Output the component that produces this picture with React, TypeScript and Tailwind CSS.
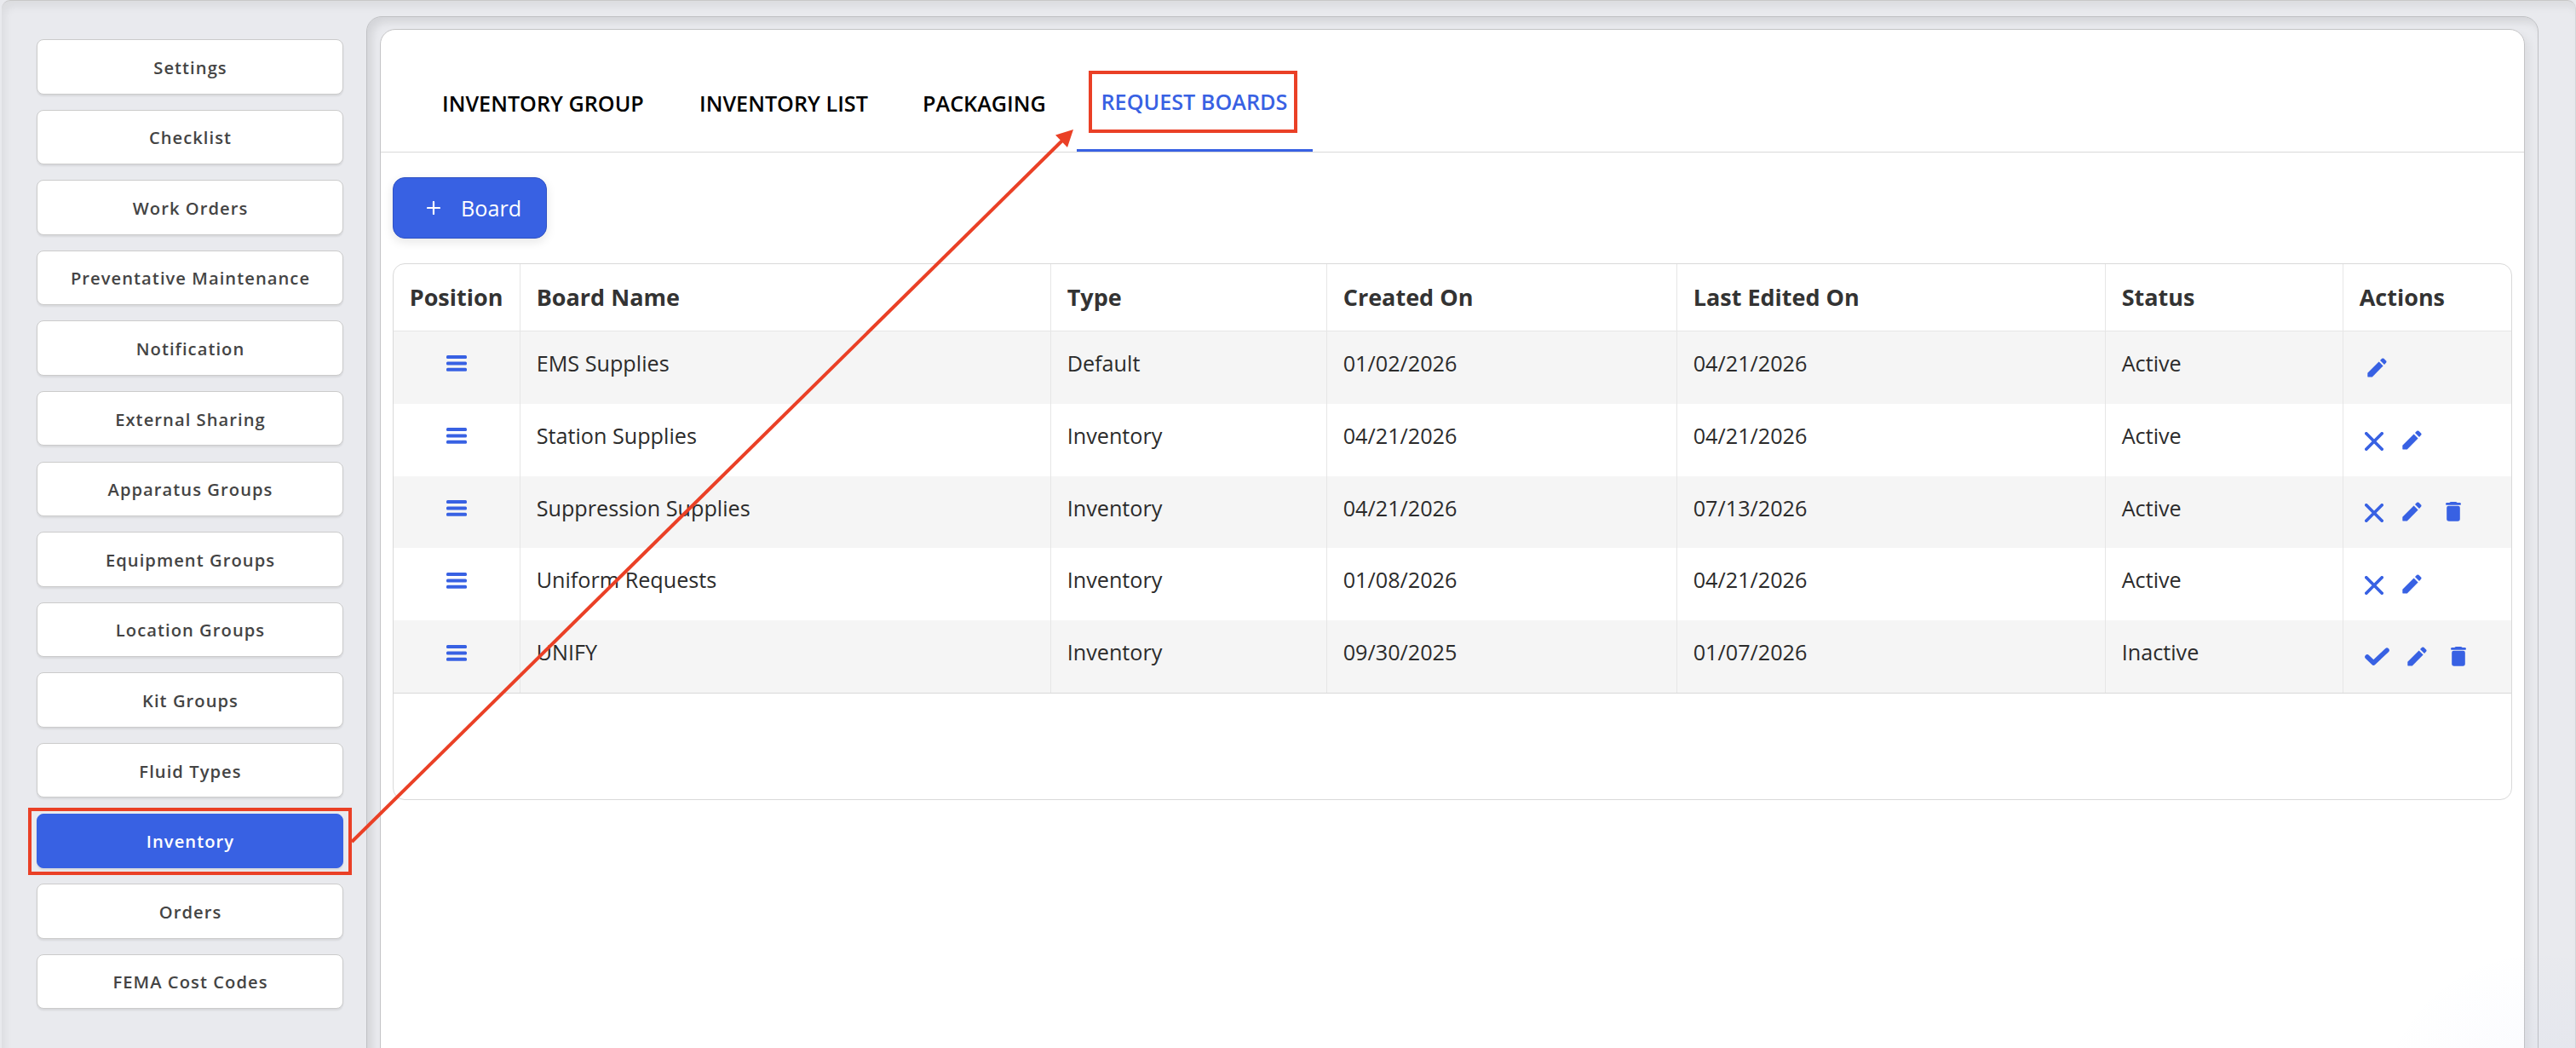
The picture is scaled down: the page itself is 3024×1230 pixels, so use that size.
import React from 'react';

interface Board {
  name: string;
  type: string;
  createdOn: string;
  lastEditedOn: string;
  active: boolean;
  canToggle: boolean;
  canDelete: boolean;
}

const menuItems = [
  'Settings',
  'Checklist',
  'Work Orders',
  'Preventative Maintenance',
  'Notification',
  'External Sharing',
  'Apparatus Groups',
  'Equipment Groups',
  'Location Groups',
  'Kit Groups',
  'Fluid Types',
  'Inventory',
  'Orders',
  'FEMA Cost Codes',
];

const boards: Board[] = [
  { name: 'EMS Supplies', type: 'Default', createdOn: '01/02/2026', lastEditedOn: '04/21/2026', active: true, canToggle: false, canDelete: false },
  { name: 'Station Supplies', type: 'Inventory', createdOn: '04/21/2026', lastEditedOn: '04/21/2026', active: true, canToggle: true, canDelete: false },
  { name: 'Suppression Supplies', type: 'Inventory', createdOn: '04/21/2026', lastEditedOn: '07/13/2026', active: true, canToggle: true, canDelete: true },
  { name: 'Uniform Requests', type: 'Inventory', createdOn: '01/08/2026', lastEditedOn: '04/21/2026', active: true, canToggle: true, canDelete: false },
  { name: 'UNIFY', type: 'Inventory', createdOn: '09/30/2025', lastEditedOn: '01/07/2026', active: false, canToggle: true, canDelete: true },
];

const columns = ['Position', 'Board Name', 'Type', 'Created On', 'Last Edited On', 'Status', 'Actions'];

const rowGrid = 'grid grid-cols-[149px_623px_324px_411px_503px_279px_1fr]';

const MenuIcon = () => (
  <svg className="w-[24px] h-[19px]" viewBox="0 0 24 19" fill="#3861e3">
    <rect width="24" height="4" rx="1.5" />
    <rect y="7.4" width="24" height="4" rx="1.5" />
    <rect y="14.8" width="24" height="4" rx="1.5" />
  </svg>
);

const CrossIcon = () => (
  <svg className="w-[22px] h-[22px]" viewBox="0 0 22 22" stroke="#3861e3" strokeWidth="3.7" strokeLinecap="round">
    <path d="M1.8 1.8 20.2 20.2M20.2 1.8 1.8 20.2" />
  </svg>
);

const CheckIcon = () => (
  <svg className="w-[29px] h-[22px]" viewBox="0 0 29 22" fill="none" stroke="#3861e3" strokeWidth="5.6" strokeLinecap="round" strokeLinejoin="round">
    <path d="M3 11 10.3 18 26 3.2" />
  </svg>
);

const PencilIcon = () => (
  <svg className="w-[23px] h-[23px]" viewBox="0 0 23 23" fill="#3861e3">
    <path d="M0.3 17.7 13.6 4.4 18.6 9.4 5.8 22.4H0.9Q0.3 22.4 0.3 21.8Z" />
    <path d="M15 3 17.2 0.8Q18.3 0 19.4 0.8L22.1 3.5Q23 4.5 22.2 5.5L20 8Z" />
  </svg>
);

const TrashIcon = () => (
  <svg className="w-[18px] h-[23px]" viewBox="0 0 18 23" fill="#3861e3">
    <path d="M1.3 1H4.4Q5 0 6.6 0H11.4Q13 0 13.6 1H16.7Q18 1.3 18 2.4T16.7 3.8H1.3Q0 3.6 0 2.4T1.3 1Z" />
    <path d="M1.2 7Q1.2 4.8 3.4 4.8H14.6Q16.8 4.8 16.8 7V20Q16.8 22.8 14 22.8H4Q1.2 22.8 1.2 20Z" />
  </svg>
);

const Sidebar = () => (
  <nav className="w-[428px] shrink-0 pl-[41px] pt-[45px] flex flex-col gap-[18.1px]">
    {menuItems.map((item) => (
      <button
        key={item}
        className={`w-[360px] h-[64.5px] shrink-0 rounded-lg border pt-[1px] pl-[1px] text-[20.16px] font-semibold tracking-[1.05px] shadow-[0_2px_2px_rgba(0,0,0,0.08)] ${
          item === 'Inventory' ? 'bg-[#3861e3] border-[#3861e3] text-white' : 'bg-white border-[#cbcbcb] text-[#444444]'
        }`}
      >
        {item}
      </button>
    ))}
  </nav>
);

const Tabs = () => (
  <div className="h-[144px] shrink-0 border-b border-[#d9d9d9] flex items-end pl-[54px] text-[25.2px] font-semibold text-black">
    <div className="w-[302px] h-[75px] pl-[18px]">INVENTORY GROUP</div>
    <div className="w-[262px] h-[75px] pl-[18px]">INVENTORY LIST</div>
    <div className="w-[199px] h-[75px] pl-[18px]">PACKAGING</div>
    <div className="w-[277px] h-[77px] border-b-3 border-[#3861e3] pl-[28.5px] text-[#3861e3] whitespace-nowrap">REQUEST BOARDS</div>
  </div>
);

const BoardTable = () => (
  <div className="mt-[29px] h-[630px] w-[2488px] shrink-0 rounded-[14px] border border-[#d9d9d9] overflow-hidden">
    <div className={`${rowGrid} h-[79px] border-b border-[#e6e6e6] text-[27px] font-bold text-[#333333]`}>
      {columns.map((column) => (
        <div key={column} className="flex items-center pl-[18.7px] border-r border-[#e6e6e6] last:border-r-0">
          {column}
        </div>
      ))}
    </div>
    <div className="border-b border-[#d9d9d9] text-[25.2px] text-[#2b2b2b]">
      {boards.map((board) => (
        <div key={board.name} className={`${rowGrid} h-[84.8px] odd:bg-[#f5f5f5] *:border-r *:border-[#e6e6e6] *:pl-[18.7px] *:pb-[9px] *:flex *:items-center`}>
          <div className="justify-center pr-[18.7px]">
            <MenuIcon />
          </div>
          <div>{board.name}</div>
          <div>{board.type}</div>
          <div>{board.createdOn}</div>
          <div>{board.lastEditedOn}</div>
          <div>{board.active ? 'Active' : 'Inactive'}</div>
          <div className="border-r-0!">
            <div className="flex items-center pt-[9px] pl-[6px]">
              {board.canToggle && (
                <span className={board.active ? 'mr-[22.5px] mt-[3px]' : 'mr-[21.5px] mt-[1px]'}>
                  {board.active ? <CrossIcon /> : <CheckIcon />}
                </span>
              )}
              <span className={board.canToggle ? '' : 'pl-[3.5px]'}>
                <PencilIcon />
              </span>
              {board.canDelete && (
                <span className="ml-[28px]">
                  <TrashIcon />
                </span>
              )}
            </div>
          </div>
        </div>
      ))}
    </div>
  </div>
);

// Red callouts pointing from the menu item to the tab
const Annotations = () => (
  <svg className="absolute inset-0 w-[3024px] h-[1230px] pointer-events-none" viewBox="0 0 3024 1230" fill="none" stroke="#ea4026" strokeWidth="4">
    <rect x="35" y="950" width="376" height="75" />
    <rect x="1280" y="85" width="241" height="69" />
    <path d="M413 988 1249 163" />
    <path d="M1260 152 1239 158.5 1253 173Z" fill="#ea4026" stroke="none" />
  </svg>
);

const App: React.FC = () => {
  return (
    <div className="relative w-[3024px] h-[1230px] overflow-hidden bg-[#e9eaee] font-['Open_Sans','Noto_Sans',sans-serif]">
      <div className="ml-[2px] h-[1260px] flex rounded-[10px] border border-l-0 border-[#c8c8c8] border-r-[#d5d6d8] bg-[#e9eaee] shadow-[inset_4px_7px_10px_rgba(0,0,0,0.06)]">
        <Sidebar />
        <div className="mt-[18px] w-[2550px] shrink-0 rounded-[18px] border border-[#c0c1c4] bg-[#e9eaee] pt-[14px] pl-[15px] shadow-[inset_6px_6px_10px_rgba(0,0,0,0.09)]">
          <div className="h-[1240px] w-[2518px] rounded-[18px] border border-[#c4c4c6] bg-white flex flex-col shadow-[6px_6px_10px_rgba(0,0,0,0.05)]">
            <Tabs />
            <div className="pl-[14px] pt-[29px] flex flex-col">
              <button className="w-[181px] h-[72px] shrink-0 rounded-[14px] border border-[#2f52c4] bg-[#3861e3] text-white text-[25.2px] flex items-center pl-[38.5px] shadow-[0_4px_12px_rgba(0,0,0,0.1)]">
                <svg className="w-[16px] h-[16px] mr-[24.5px]" viewBox="0 0 16 16" stroke="white" strokeWidth="2.2" strokeLinecap="round">
                  <path d="M8 1V15M1 8H15" />
                </svg>
                <span className="pt-[1px]">Board</span>
              </button>
              <BoardTable />
            </div>
          </div>
        </div>
      </div>
      <div className="absolute right-0 bottom-0 w-[260px] h-[180px] bg-[radial-gradient(circle_200px_at_220px_260px,rgba(56,96,226,0.035),transparent)]" />
      <Annotations />
    </div>
  );
};

export default App;
